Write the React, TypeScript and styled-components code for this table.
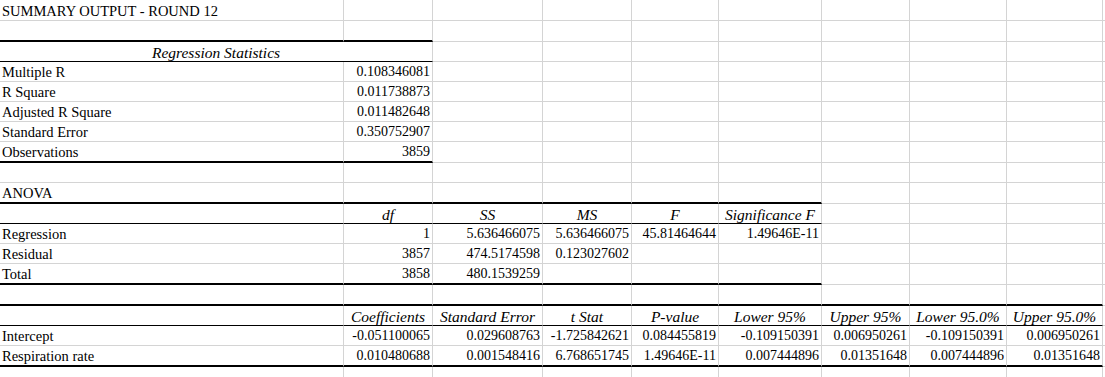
import React from "react";
import styled, { createGlobalStyle, css } from "styled-components";

const GlobalStyle = createGlobalStyle`
  html, body {
    margin: 0;
    padding: 0;
    background: #ffffff;
    overflow: hidden;
  }
`;

const COLS = [344, 89, 110, 89, 87, 103, 88, 97, 96];
const ROWS = [21, 21, 20, 20, 20, 20, 20, 21, 20, 21, 20, 20, 20, 21, 21, 20, 20, 21, 21];

const Sheet = styled.div`
  display: grid;
  grid-template-columns: ${COLS.map((c) => `${c}px`).join(" ")} 1fr;
  grid-template-rows: ${ROWS.map((r) => `${r}px`).join(" ")};
  width: 100vw;
  font-family: "Liberation Serif", "Times New Roman", serif;
  color: #000000;
`;

type Kind = "text" | "num" | "head";
type Edge = "grid" | "thin" | "thick";

const Cell = styled.div<{ $kind: Kind; $edge: Edge; $span: number }>`
  box-sizing: border-box;
  grid-column: span ${(p) => p.$span};
  display: flex;
  align-items: flex-end;
  min-width: 0;
  white-space: nowrap;
  padding: 0 2px 1px 2px;
  line-height: 16px;
  border-right: 1px solid #d4d4d4;
  border-bottom: ${(p) =>
    p.$edge === "thick"
      ? "2px solid #000000"
      : p.$edge === "thin"
      ? "1px solid #000000"
      : "1px solid #d4d4d4"};
  ${(p) =>
    p.$kind === "text" &&
    css`
      justify-content: flex-start;
      font-size: 14.5px;
    `}
  ${(p) =>
    p.$kind === "num" &&
    css`
      justify-content: flex-end;
      font-size: 14px;
    `}
  ${(p) =>
    p.$kind === "head" &&
    css`
      justify-content: center;
      font-size: 15.5px;
      font-style: italic;
      padding-bottom: 0;
    `}
`;

type CellDef = { t: string; k?: Kind; span?: number };
type RowDef = { cells: (CellDef | string)[]; line?: { to: number; w: Edge } };

const H = (t: string, span = 1): CellDef => ({ t, k: "head", span });

const rows: RowDef[] = [
  { cells: ["SUMMARY OUTPUT - ROUND 12"] },
  { cells: [], line: { to: 2, w: "thick" } },
  { cells: [H("Regression Statistics", 2)], line: { to: 2, w: "thin" } },
  { cells: ["Multiple R", "0.108346081"] },
  { cells: ["R Square", "0.011738873"] },
  { cells: ["Adjusted R Square", "0.011482648"] },
  { cells: ["Standard Error", "0.350752907"] },
  { cells: ["Observations", "3859"], line: { to: 2, w: "thick" } },
  { cells: [] },
  { cells: ["ANOVA"], line: { to: 6, w: "thick" } },
  {
    cells: ["", H("df"), H("SS"), H("MS"), H("F"), H("Significance F")],
    line: { to: 6, w: "thin" },
  },
  { cells: ["Regression", "1", "5.636466075", "5.636466075", "45.81464644", "1.49646E-11"] },
  { cells: ["Residual", "3857", "474.5174598", "0.123027602"] },
  { cells: ["Total", "3858", "480.1539259"], line: { to: 6, w: "thick" } },
  { cells: [], line: { to: 9, w: "thick" } },
  {
    cells: [
      "",
      H("Coefficients"),
      H("Standard Error"),
      H("t Stat"),
      H("P-value"),
      H("Lower 95%"),
      H("Upper 95%"),
      H("Lower 95.0%"),
      H("Upper 95.0%"),
    ],
    line: { to: 9, w: "thin" },
  },
  {
    cells: [
      "Intercept",
      "-0.051100065",
      "0.029608763",
      "-1.725842621",
      "0.084455819",
      "-0.109150391",
      "0.006950261",
      "-0.109150391",
      "0.006950261",
    ],
  },
  {
    cells: [
      "Respiration rate",
      "0.010480688",
      "0.001548416",
      "6.768651745",
      "1.49646E-11",
      "0.007444896",
      "0.01351648",
      "0.007444896",
      "0.01351648",
    ],
    line: { to: 9, w: "thick" },
  },
  { cells: [] },
];

const TOTAL_COLS = 10;

function renderRow(row: RowDef, ri: number) {
  const out: React.ReactNode[] = [];
  let col = 0;
  let i = 0;
  while (col < TOTAL_COLS) {
    const raw = row.cells[i];
    i += 1;
    let def: CellDef;
    if (raw === undefined) def = { t: "" };
    else if (typeof raw === "string") def = { t: raw };
    else def = raw;
    const span = def.span ?? 1;
    const kind: Kind = def.k ?? (col === 0 ? "text" : "num");
    const edge: Edge = row.line && col < row.line.to ? row.line.w : "grid";
    out.push(
      <Cell key={`${ri}-${col}`} $kind={kind} $edge={edge} $span={span}>
        {def.t}
      </Cell>
    );
    col += span;
  }
  return out;
}

export default function App() {
  return (
    <>
      <GlobalStyle />
      <Sheet>{rows.map((r, ri) => renderRow(r, ri))}</Sheet>
    </>
  );
}
